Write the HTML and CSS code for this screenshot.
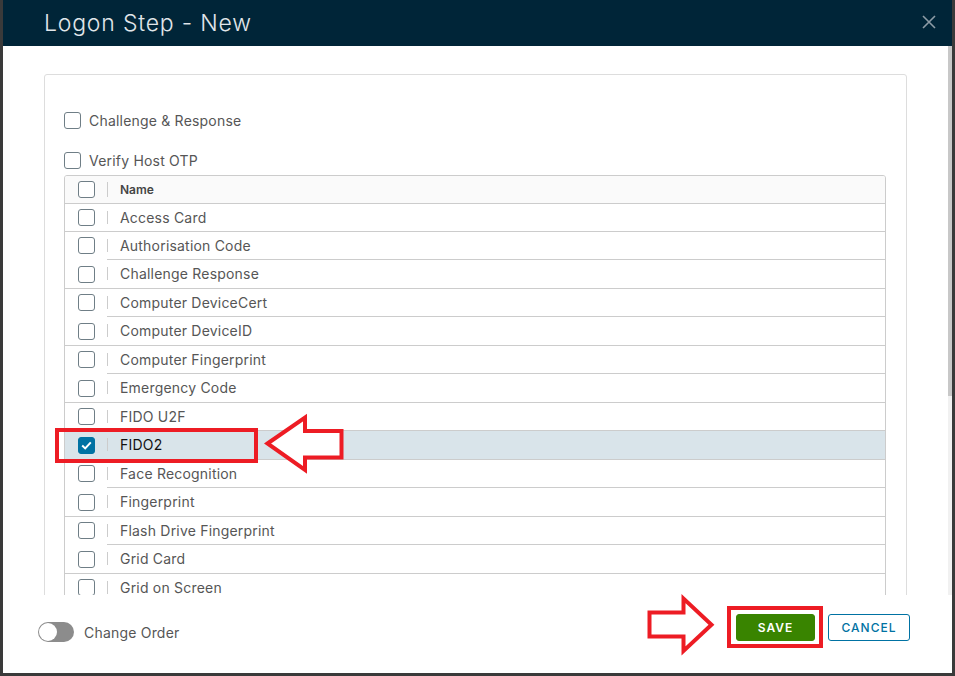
FILE: index.html
```html
<!DOCTYPE html>
<html>
<head>
<meta charset="utf-8">
<title>Logon Step - New</title>
<link rel="stylesheet" href="styles.css">
</head>
<body>
<div class="modal">
  <div class="modal-header">
    <h3 class="modal-title">Logon Step - New</h3>
    <button class="close" aria-label="Close">
      <svg width="14" height="14" viewBox="0 0 14 14"><path d="M1 1 L13 13 M13 1 L1 13" stroke="#8d9ca6" stroke-width="1.6" fill="none"/></svg>
    </button>
  </div>
  <div class="modal-body">
    <div class="body-content">
      <div class="panel">
        <label class="option"><span class="cb"></span><span class="opt-text">Challenge &amp; Response</span></label>
        <label class="option"><span class="cb"></span><span class="opt-text">Verify Host OTP</span></label>
        <div class="grid">
          <div class="row head"><div class="c-sel"><span class="cb"></span></div><div class="c-name">Name</div></div>
          <div class="row"><div class="c-sel"><span class="cb"></span></div><div class="c-name">Access Card</div></div>
          <div class="row p"><div class="c-sel"><span class="cb"></span></div><div class="c-name">Authorisation Code</div></div>
          <div class="row"><div class="c-sel"><span class="cb"></span></div><div class="c-name">Challenge Response</div></div>
          <div class="row p"><div class="c-sel"><span class="cb"></span></div><div class="c-name">Computer DeviceCert</div></div>
          <div class="row"><div class="c-sel"><span class="cb"></span></div><div class="c-name">Computer DeviceID</div></div>
          <div class="row p"><div class="c-sel"><span class="cb"></span></div><div class="c-name">Computer Fingerprint</div></div>
          <div class="row"><div class="c-sel"><span class="cb"></span></div><div class="c-name">Emergency Code</div></div>
          <div class="row"><div class="c-sel"><span class="cb"></span></div><div class="c-name">FIDO U2F</div></div>
          <div class="row sel"><div class="c-sel"><span class="cb on"><svg width="11" height="9" viewBox="0 0 11 9"><path d="M1.2 4.6 L4.2 7.4 L9.8 1.4" stroke="#fff" stroke-width="2" fill="none"/></svg></span></div><div class="c-name">FIDO2</div></div>
          <div class="row p"><div class="c-sel"><span class="cb"></span></div><div class="c-name">Face Recognition</div></div>
          <div class="row"><div class="c-sel"><span class="cb"></span></div><div class="c-name">Fingerprint</div></div>
          <div class="row p"><div class="c-sel"><span class="cb"></span></div><div class="c-name">Flash Drive Fingerprint</div></div>
          <div class="row"><div class="c-sel"><span class="cb"></span></div><div class="c-name">Grid Card</div></div>
          <div class="row p"><div class="c-sel"><span class="cb"></span></div><div class="c-name">Grid on Screen</div></div>
          <div class="row"><div class="c-sel"><span class="cb"></span></div><div class="c-name">Hardware OTP</div></div>
          <div class="row p"><div class="c-sel"><span class="cb"></span></div><div class="c-name">Kerberos</div></div>
          <div class="row"><div class="c-sel"><span class="cb"></span></div><div class="c-name">Mobile OTP</div></div>
          <div class="row p"><div class="c-sel"><span class="cb"></span></div><div class="c-name">Password</div></div>
          <div class="row"><div class="c-sel"><span class="cb"></span></div><div class="c-name">PIN</div></div>
        </div>
      </div>
    </div>
    <div class="scrollbar"><div class="thumb"></div></div>
  </div>
  <div class="modal-footer">
    <div class="toggle-wrap"><span class="toggle"></span><span>Change Order</span></div>
    <div class="buttons">
      <button class="btn save">Save</button>
      <button class="btn cancel">Cancel</button>
    </div>
  </div>
</div>
<svg class="annot" width="955" height="676" viewBox="0 0 955 676">
  <rect x="57" y="430" width="199" height="31" fill="none" stroke="#ed1c24" stroke-width="4"/>
  <path d="M267.5 443.5 L305 417.5 L305 431 L341.5 431 L341.5 457.5 L305 457.5 L305 470 Z" fill="#fff" stroke="#ed1c24" stroke-width="4" stroke-linejoin="miter"/>
  <rect x="729" y="608" width="92" height="38" fill="none" stroke="#ed1c24" stroke-width="4"/>
  <path d="M649.5 612.5 L683.5 612.5 L683.5 598.5 L711.5 624.7 L683.5 651 L683.5 636.5 L649.5 636.5 Z" fill="#fff" stroke="#ed1c24" stroke-width="4" stroke-linejoin="miter"/>
</svg>
</body>
</html>
```

FILE: styles.css
```css
* { box-sizing: border-box; }

html, body {
  margin: 0;
  padding: 0;
}

body {
  position: relative;
  width: 955px;
  height: 676px;
  overflow: hidden;
  background: #3a3a3a;
  padding-left: 3px;
  font-family: Inter, "Open Sans", "DejaVu Sans", sans-serif;
}

.modal {
  width: 949px;
  height: 673px;
  background: #fff;
  display: flex;
  flex-direction: column;
}

.modal-header {
  flex: none;
  height: 46px;
  background: #002538;
  display: flex;
  align-items: center;
  justify-content: space-between;
  padding: 0 16px 0 41px;
}

.modal-title {
  margin: 0 0 1px;
  font-size: 23px;
  font-weight: 300;
  color: #e1e6ea;
  letter-spacing: 0.8px;
}

.close {
  border: 0;
  background: transparent;
  padding: 0;
  width: 14px;
  height: 14px;
  display: flex;
  margin-top: -2px;
}

.modal-body {
  flex: none;
  height: 549px;
  display: flex;
  overflow: hidden;
}

.body-content {
  flex: 1;
  overflow: hidden;
}

.scrollbar {
  flex: none;
  width: 4px;
  background: #f1f1f1;
}

.thumb {
  height: 350px;
  background: #c8c8c8;
}

.panel {
  margin: 28px 41px 20px;
  border: 1px solid #dddddd;
  border-radius: 3px;
  padding: 37px 20px 20px 19px;
}

.option {
  display: flex;
  align-items: center;
  gap: 8px;
  height: 17px;
  font-size: 14px;
  letter-spacing: 0.2px;
  color: #565656;
}

.opt-text { margin-bottom: 1px; }

.option + .option { margin-top: 23px; }

.cb {
  flex: none;
  width: 17px;
  height: 17px;
  border: 1px solid #6f7e86;
  border-radius: 3px;
  background: #fff;
  display: flex;
  align-items: center;
  justify-content: center;
}

.cb.on {
  background: #0072a3;
  border-color: #0072a3;
}

.grid {
  margin-top: 6px;
  border: 1px solid #cccccc;
  border-radius: 3px;
  overflow: hidden;
}

.row {
  display: flex;
  height: 28px;
}

.row:nth-child(2n+4) { height: 29px; }

.c-sel {
  flex: none;
  width: 42px;
  display: flex;
  align-items: center;
  padding-left: 13px;
  border-bottom: 1px solid #cccccc;
}

.c-name {
  position: relative;
  flex: 1;
  display: flex;
  align-items: center;
  padding: 0 0 1px 13px;
  border-bottom: 1px solid #cccccc;
  font-size: 14px;
  letter-spacing: 0.2px;
  color: #565656;
}

.c-name::before {
  content: "";
  position: absolute;
  left: 0;
  top: 50%;
  width: 1px;
  height: 13px;
  margin-top: -7px;
  background: #cccccc;
}

.row.p .c-sel { border-bottom-color: transparent; }

.row.head { background: #fafafa; }
.row.head .c-name {
  font-size: 12px;
  font-weight: 600;
  letter-spacing: 0;
  color: #454545;
}
.row.head .c-name::before { height: 15px; margin-top: -8px; }

.row.sel { background: #d9e4ea; }
.row.sel .c-name { color: #111; }

.modal-footer {
  flex: 1;
  display: flex;
  justify-content: space-between;
  align-items: flex-start;
  padding: 0 42px 0 35px;
}

.toggle-wrap {
  margin-top: 27px;
  display: flex;
  align-items: center;
  gap: 10px;
  font-size: 14px;
  letter-spacing: 0.2px;
  color: #565656;
}

.toggle {
  position: relative;
  width: 36px;
  height: 20px;
  border-radius: 10px;
  background: #8c8c8c;
}

.toggle::after {
  content: "";
  position: absolute;
  left: 1px;
  top: 1px;
  width: 18px;
  height: 18px;
  border-radius: 50%;
  background: #fff;
}

.buttons {
  margin-top: 19px;
  display: flex;
  gap: 13px;
}

.btn {
  height: 27px;
  padding: 0;
  border-radius: 3px;
  font-family: inherit;
  font-size: 12px;
  font-weight: 600;
  letter-spacing: 1px;
  text-transform: uppercase;
}

.save {
  width: 79px;
  background: #398400;
  border: 1px solid #398400;
  color: #fff;
}

.cancel {
  width: 82px;
  background: #fff;
  border: 1px solid #0072a3;
  color: #0072a3;
  font-weight: 500;
}

.annot {
  position: absolute;
  left: 0;
  top: 0;
  pointer-events: none;
}
```
